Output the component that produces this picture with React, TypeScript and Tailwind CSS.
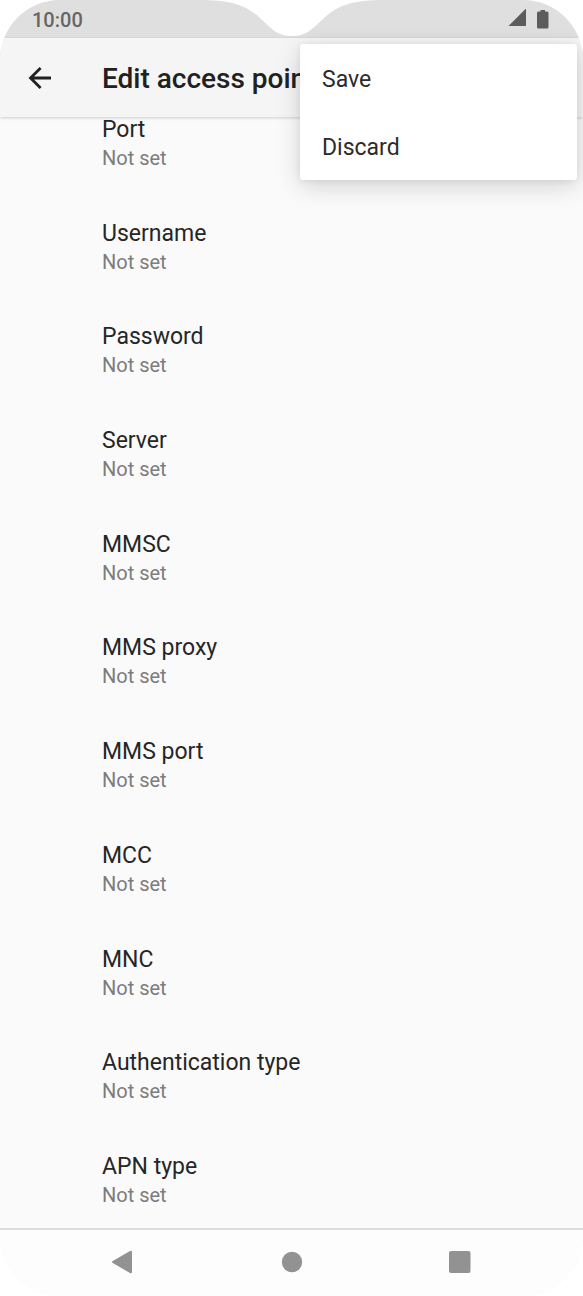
import React from 'react';

const settings = [
  { title: 'Port', value: 'Not set' },
  { title: 'Username', value: 'Not set' },
  { title: 'Password', value: 'Not set' },
  { title: 'Server', value: 'Not set' },
  { title: 'MMSC', value: 'Not set' },
  { title: 'MMS proxy', value: 'Not set' },
  { title: 'MMS port', value: 'Not set' },
  { title: 'MCC', value: 'Not set' },
  { title: 'MNC', value: 'Not set' },
  { title: 'Authentication type', value: 'Not set' },
  { title: 'APN type', value: 'Not set' },
];

const StatusBar: React.FC = () => (
  <div className="relative flex h-[38px] shrink-0 items-center justify-between bg-[#dfdfdf] pl-8 pr-[34px]">
    <span className="pt-[2px] text-xl leading-6 font-medium text-[#666666]">10:00</span>
    {/* display notch */}
    <svg
      className="absolute left-1/2 top-0 -translate-x-1/2"
      width="184"
      height="37"
      viewBox="0 0 184 37"
      fill="#ffffff"
      aria-hidden="true"
    >
      <path d="M0 0 H184 C154 0 138 5 124 18 C112 29 107 36 92 36 C77 36 72 29 60 18 C46 5 30 0 0 0 Z" />
    </svg>
    <div className="flex items-center gap-[11px]">
      <svg width="18" height="20" viewBox="0 0 18 20" fill="#5c5c5c" aria-label="Signal">
        <path d="M0.5 17 L18 -0.5 V17 Z" />
      </svg>
      <svg width="12" height="20" viewBox="0 0 12 20" fill="#5c5c5c" aria-label="Battery">
        <path d="M3.5 1 H8 V2.5 H10 Q11.5 2.5 11.5 4 V18 Q11.5 19.5 10 19.5 H1.5 Q0 19.5 0 18 V4 Q0 2.5 1.5 2.5 H3.5 Z" />
      </svg>
    </div>
  </div>
);

const OverflowMenu: React.FC = () => (
  <div
    role="menu"
    className="absolute right-[6px] top-[44px] z-20 w-[277px] rounded-[3px] bg-white shadow-[0_6px_24px_rgba(0,0,0,0.16),0_1px_6px_rgba(0,0,0,0.07)]"
  >
    {['Save', 'Discard'].map((label) => (
      <button
        key={label}
        type="button"
        role="menuitem"
        className="flex h-[68px] w-full items-center px-[22px] pt-1 text-left text-[23px] leading-6 text-[#2b2b2b]"
      >
        {label}
      </button>
    ))}
  </div>
);

const NavBar: React.FC = () => (
  <nav className="flex h-[68px] shrink-0 items-center justify-center gap-[144px] border-t-2 border-[#dcdcdc] bg-[#fdfdfd] pb-[2px] text-[#929292]">
    <button type="button" aria-label="Back">
      <svg width="24" height="24" viewBox="0 0 24 24" fill="currentColor">
        <path d="M0.8 10.9 L18 1 Q20 0 20 2 V22 Q20 24 18 23 L0.8 13.1 Q-1 12 0.8 10.9 Z" />
      </svg>
    </button>
    <button type="button" aria-label="Home">
      <svg width="24" height="24" viewBox="0 0 24 24" fill="currentColor">
        <circle cx="12" cy="12" r="10.2" />
      </svg>
    </button>
    <button type="button" aria-label="Recent apps">
      <svg width="24" height="24" viewBox="0 0 24 24" fill="currentColor">
        <rect x="1" y="1" width="21.5" height="22" rx="2" />
      </svg>
    </button>
  </nav>
);

export default function App() {
  return (
    <div className="bg-white font-[Roboto,sans-serif]">
      <div className="relative flex min-h-screen flex-col overflow-hidden rounded-[60px] bg-[#fafafa]">
        <StatusBar />

        <header className="z-10 flex h-[79px] shrink-0 items-center bg-[#f5f5f5] pl-[26px] shadow-[0_1px_3px_rgba(0,0,0,0.18)]">
          <button type="button" aria-label="Navigate up" className="mr-12">
            <svg width="28" height="28" viewBox="0 0 28 28" fill="none" stroke="#212121" strokeWidth="2.8">
              <path d="M25 14 H4.8 M14.6 3.9 L4.5 14 L14.6 24.1" />
            </svg>
          </button>
          <h1 className="whitespace-nowrap pt-[2px] text-[28px] leading-8 font-medium text-[#212121]">
            Edit access point
          </h1>
        </header>

        <main className="flex grow flex-col pt-px pb-[21px]">
          <ul className="flex grow flex-col justify-between gap-8">
            {settings.map((item) => (
              <li key={item.title}>
                <button type="button" className="block w-full pl-[102px] text-left">
                  <span className="block text-[23px] leading-6 text-[#262626]">{item.title}</span>
                  <span className="mt-1 block text-xl leading-6 text-[#7c7c7c]">{item.value}</span>
                </button>
              </li>
            ))}
          </ul>
        </main>

        <NavBar />
        <OverflowMenu />
      </div>
    </div>
  );
}
